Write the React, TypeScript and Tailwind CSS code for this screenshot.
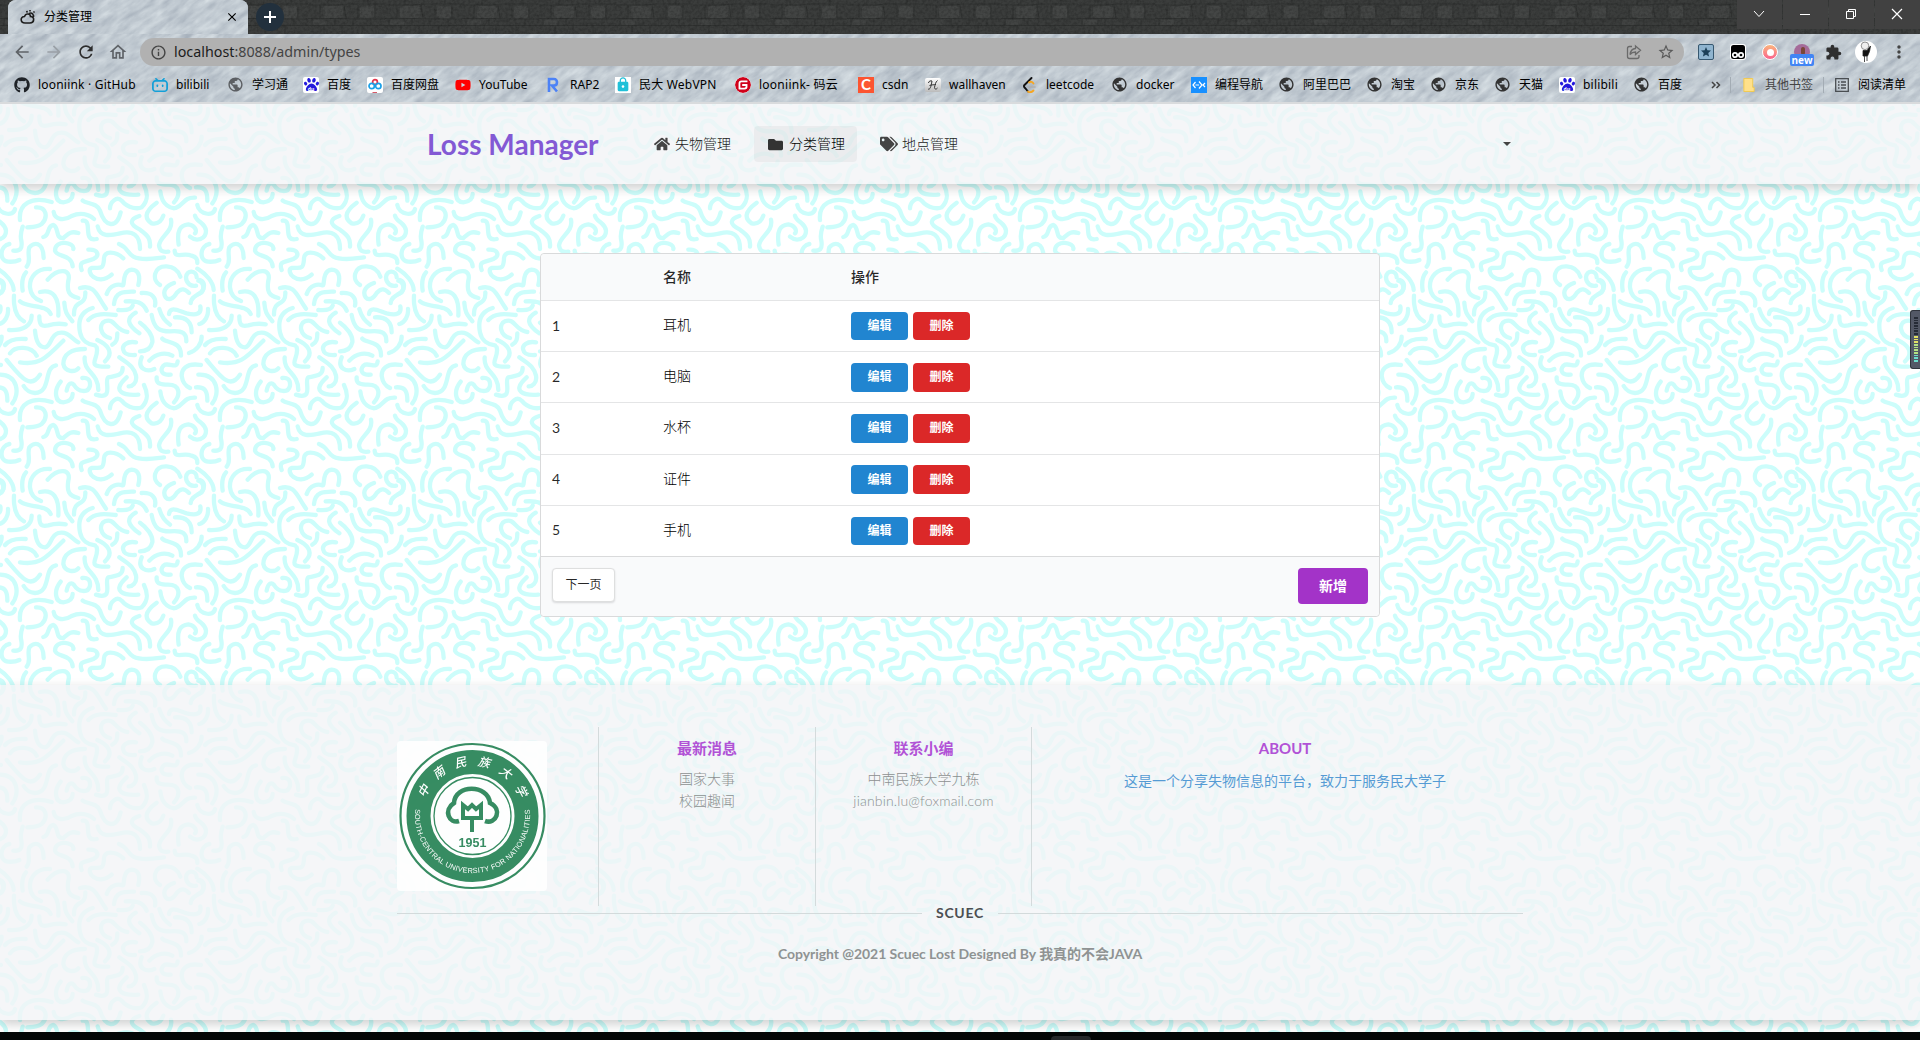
import React from "react";
import { FaGithub, FaHome, FaFolder, FaTags, FaYoutube, FaPaw } from "react-icons/fa";
import { SiBilibili, SiGitee } from "react-icons/si";
import {
  MdPublic,
  MdArrowBack,
  MdArrowForward,
  MdRefresh,
  MdOutlineHome,
  MdInfoOutline,
  MdStarBorder,
  MdStar,
  MdExtension,
  MdMoreVert,
  MdLock,
  MdClose,
} from "react-icons/md";

/* Doodle strokes of one 200px wallpaper tile, in thirds of a pixel. */
const STROKES = [
  "M42 575 C40 615 48 640 72 652",
  "M24 615 C26 635 15 655 -2 660",
  "M95 35 C95 65 70 80 27 78",
  "M118 37 C118 65 125 68 145 64 C165 58 180 58 197 61",
  "M60 592 C80 612 140 600 152 630",
  "M120 564 C160 555 178 580 175 635",
  "M193 596 C195 630 205 635 217 652",
  "M105 80 C108 115 120 130 135 130 C155 125 150 95 175 87 C205 80 215 105 235 115",
  "M15 123 C30 105 55 103 77 105",
  "M30 148 C45 125 95 125 110 155",
  "M60 175 C120 185 140 160 190 110",
  "M255 135 C215 135 190 150 190 180 C195 205 225 205 235 193",
  "M278 12 C235 25 235 60 240 85 C245 110 265 122 285 124",
  "M265 48 C285 25 320 30 347 33",
  "M330 102 C300 95 295 60 315 52 C345 40 345 80 382 84",
  "M352 88 C352 105 350 115 337 122",
  "M407 26 C380 42 378 60 418 88",
  "M420 56 C440 70 460 95 457 115 C452 138 435 142 420 142",
  "M455 33 C462 75 480 82 510 82 C550 78 560 90 559 112",
  "M525 40 C560 38 575 55 575 85",
  "M507 30 C510 5 535 20 560 28 C590 35 605 30 601 7",
  "M478 15 C485 40 495 50 510 62",
  "M567 147 C590 140 605 120 605 98",
  "M487 104 C500 118 545 110 543 155",
  "M448 170 C470 145 500 145 517 155",
  "M408 115 C380 110 365 125 370 138 C372 152 385 154 405 153",
  "M292 108 C320 120 345 145 315 172",
  "M290 130 C300 165 250 190 325 188",
  "M254 160 C250 205 295 205 295 258",
  "M358 160 C385 180 400 185 408 215 C412 238 395 248 386 247",
  "M415 272 C375 275 330 265 380 220",
  "M368 192 C368 215 350 215 325 220 C310 230 345 290 288 272",
  "M425 160 C410 195 440 205 463 195",
  "M533 172 C530 195 515 178 495 182 C480 190 478 215 512 212",
  "M603 183 C555 175 545 200 545 215 C548 240 560 247 570 252",
  "M20 168 C60 215 90 260 120 212",
  "M168 184 C130 190 155 265 105 267 C85 265 78 258 71 246",
  "M182 233 C160 260 165 295 190 295 C215 292 218 280 218 270",
  "M200 260 C205 235 215 235 222 243 C235 265 265 268 270 245 C272 225 260 220 247 222",
  "M-5 212 C55 210 60 270 37 298",
  "M-12 250 C18 248 22 265 22 290",
  "M470 220 C468 240 480 240 500 242 C545 240 540 275 522 295",
  "M481 262 C485 305 515 315 527 312 C555 300 550 280 585 281",
  "M592 303 C597 330 640 340 645 315",
  "M330 313 C330 295 350 275 365 290 C385 315 415 315 425 310 C445 290 445 270 432 243",
  "M470 296 C430 325 435 345 455 358 C475 362 485 350 490 335",
  "M60 348 C55 300 95 275 155 294",
  "M108 310 C140 308 145 340 125 360 C110 370 100 369 82 370",
  "M161 324 C165 350 195 350 215 336 C240 325 265 330 282 345",
  "M248 290 C260 300 290 295 300 320 C315 370 350 375 362 325",
  "M130 399 C150 395 140 365 160 363 C178 370 165 405 190 402 C205 390 210 380 235 387",
  "M248 350 C280 345 245 415 290 405",
  "M293 367 C300 400 330 395 360 388 C400 378 420 395 420 435",
  "M418 336 C390 345 385 360 420 377 C445 395 452 405 450 428",
  "M513 347 C520 385 480 395 477 425 C480 440 485 445 505 443",
  "M536 422 C530 380 540 363 565 361 C590 365 590 385 585 388",
  "M585 335 C590 355 615 355 618 380 C618 405 590 415 570 398",
  "M68 368 C62 385 60 395 64 410 C68 435 60 442 40 440",
  "M28 420 C0 425 -5 470 25 473 C40 474 50 472 58 468",
  "M80 488 C95 470 80 450 88 430 C100 415 130 410 131 462",
  "M220 435 C225 415 165 405 165 440 C170 460 215 450 218 487",
  "M265 437 C295 435 300 455 280 465 C255 475 235 470 245 498",
  "M370 463 C345 440 310 440 312 465 C310 500 300 490 275 492 C255 500 290 550 335 512",
  "M357 420 C395 435 375 465 440 465 C460 465 475 462 492 460",
  "M524 440 C525 465 550 445 575 455 C590 460 592 465 592 477",
  "M480 543 C455 530 460 485 500 487 C525 488 535 500 541 518",
  "M590 520 C590 500 560 495 558 520 C558 540 575 548 588 545",
  "M522 537 C500 545 485 560 497 580 C505 590 520 585 530 567 C545 550 555 555 567 567",
  "M572 597 C573 570 612 575 612 545 C612 535 605 530 600 528",
  "M592 494 C620 510 640 535 641 558",
  "M78 505 C65 520 65 540 68 560",
  "M150 495 C110 492 88 520 90 550 C92 575 105 585 123 591",
  "M143 527 C175 490 215 495 205 530 C200 560 205 575 235 582",
  "M240 552 C285 540 290 575 318 614",
  "M256 565 C258 610 220 585 222 632",
  "M320 570 C330 540 355 540 368 544 C375 545 365 500 395 497 C415 498 422 515 415 543",
  "M342 600 C345 565 370 562 402 563",
  "M425 567 C455 565 470 580 465 605",
  "M377 592 C410 590 430 595 440 620",
  "M355 618 C380 620 395 615 398 605",
  "M-5 530 C15 535 15 565 -5 570",
].join(" ");

function Wallpaper() {
  const shifts = [-600, 0, 600];
  return (
    <svg className="absolute inset-0 h-full w-full" aria-hidden="true">
      <defs>
        <path id="doodle" d={STROKES} fill="none" stroke="#ccfdfb" strokeWidth="13" strokeLinecap="round" strokeLinejoin="round" />
        <pattern id="doodles" width="600" height="600" patternUnits="userSpaceOnUse" patternTransform="scale(0.33333333)">
          {shifts.map((x) => shifts.map((y) => <use key={`${x},${y}`} href="#doodle" x={x} y={y} />))}
        </pattern>
      </defs>
      <rect width="100%" height="100%" fill="#fff" />
      <rect width="100%" height="100%" fill="url(#doodles)" />
    </svg>
  );
}

function Bricks() {
  return (
    <svg className="absolute inset-0 h-full w-full" aria-hidden="true">
      <defs>
        <pattern id="bricks" width="77" height="34" patternUnits="userSpaceOnUse">
          <rect width="77" height="34" fill="#3b3d3c" />
          <rect x="15" y="6" width="20" height="12" rx="3" fill="#434544" />
          <rect x="52" y="6" width="14" height="12" rx="3" fill="#444645" />
          <rect x="5" y="20" width="14" height="5" rx="2" fill="#424443" />
          <path d="M0 5H28L40 4H77M0 18.500H30L50 19H77M0 25.500H77M12 5V18M36 5L38 18M50 5V18M67 5V18M20 0V5M60 0V5M4 19V25M27 19V25M45 19V25M63 19V25M16 26V34M54 26V34M34 26V34" stroke="#303231" fill="none" />
        </pattern>
        <filter id="grit" x="0" y="0" width="100%" height="100%">
          <feTurbulence type="fractalNoise" baseFrequency="0.35" numOctaves="3" />
          <feColorMatrix values="0 0 0 0 0  0 0 0 0 0  0 0 0 0 0  0.400 0 0 0 -0.140" />
        </filter>
      </defs>
      <rect width="100%" height="100%" fill="url(#bricks)" />
      <rect width="100%" height="100%" filter="url(#grit)" />
    </svg>
  );
}

function Ice({ id, seed }: { id: string; seed: number }) {
  return (
    <svg className="absolute inset-0 h-full w-full" aria-hidden="true">
      <defs>
        <filter id={id} x="0" y="0" width="100%" height="100%" colorInterpolationFilters="sRGB">
          <feTurbulence type="fractalNoise" baseFrequency="0.05 0.16" numOctaves="5" seed={seed} />
          <feColorMatrix values="0.240 0 0 0 0.635  0.230 0 0 0 0.675  0.200 0 0 0 0.720  0 0 0 0 1" />
        </filter>
      </defs>
      <g transform="rotate(-35)">
        <rect x="-100" y="-100" width="2000" height="1350" filter={`url(#${id})`} />
      </g>
    </svg>
  );
}

const globe = <MdPublic className="-ml-px size-[17px] text-[#333]" />;
const baidu = (
  <span className="relative flex size-4 items-center justify-center rounded-[2px] bg-white">
    <FaPaw className="size-[15px] text-[#2319dc]" />
    <span className="absolute bottom-[1px] text-[5px] leading-none font-bold text-white">du</span>
  </span>
);

const bookmarks: { icon: React.ReactNode; label: string; cell: string }[] = [
  { icon: <FaGithub className="size-4 text-[#1f2328]" />, label: "looniink · GitHub", cell: "w-[138px] tracking-[0.200px]" },
  { icon: <SiBilibili className="size-4 text-[#14a0d8]" />, label: "bilibili", cell: "w-[76px]" },
  { icon: <MdPublic className="-ml-px size-[17px] text-[#5c5f63]" />, label: "学习通", cell: "w-[75px]" },
  { icon: baidu, label: "百度", cell: "w-[64px]" },
  {
    icon: (
      <svg viewBox="0 0 16 16" className="size-4">
        <rect width="16" height="16" rx="2" fill="#fff" />
        <g fill="none" strokeWidth="1.700">
          <circle cx="8" cy="5" r="2.400" stroke="#e4344d" />
          <circle cx="4.700" cy="9" r="2.700" stroke="#1aa0e8" />
          <circle cx="11.300" cy="9" r="2.700" stroke="#1aa0e8" />
        </g>
        <path d="M5.500 15.500H10" stroke="#d65a68" />
      </svg>
    ),
    label: "百度网盘",
    cell: "w-[88px]",
  },
  { icon: <FaYoutube className="size-4 text-[#f00]" />, label: "YouTube", cell: "w-[91px]" },
  {
    icon: (
      <svg viewBox="0 0 16 16" className="size-4">
        <path d="M3 15V2H8C12 2 12 8.500 8 8.500H6L11 14.500" fill="none" stroke="#4c82f6" strokeWidth="2.600" />
      </svg>
    ),
    label: "RAP2",
    cell: "w-[69px]",
  },
  {
    icon: (
      <span className="flex size-4 items-center justify-center bg-white">
        <MdLock className="size-[17px] text-[#20c0d8]" />
      </span>
    ),
    label: "民大 WebVPN",
    cell: "w-[120px] tracking-[0.200px]",
  },
  { icon: <SiGitee className="size-4 rounded-full bg-white text-[#d0021b]" />, label: "looniink- 码云", cell: "w-[123px] tracking-[0.250px]" },
  {
    icon: (
      <span className="flex size-4 items-center justify-center bg-[#fc5531] font-['Lato'] text-[15px] leading-none font-bold text-white">C</span>
    ),
    label: "csdn",
    cell: "w-[67px]",
  },
  {
    icon: (
      <span className="flex h-[14px] w-4 items-center justify-center rounded-[2px] bg-linear-to-b from-white to-[#bbb]">
        <svg viewBox="0 0 14 12" className="h-3 w-[14px] fill-none stroke-[#333]">
          <path d="M2 10C4 11 5 8 6 2C5 1.500 2.500 2 2.500 4M3.500 6.500C6 5.500 8 6 10 5.500M11.500 1.500C9.500 3 9 6 8.500 8.500C8.500 10.500 10.500 10.500 11.500 9" />
        </svg>
      </span>
    ),
    label: "wallhaven",
    cell: "w-[97px]",
  },
  {
    icon: (
      <svg viewBox="0 0 16 16" className="size-4" fill="none" strokeLinecap="round">
        <path d="M9.500 1L2.500 8C1.500 9 2 10 3 11L6 14.500" stroke="#111" strokeWidth="1.900" />
        <path d="M6 14.500C8 16 10 15 11.500 13.500M7 5.500C9 4 10.500 5 11.500 6.500" stroke="#f5a623" strokeWidth="1.800" />
        <path d="M7 10H13" stroke="#b0b0b0" strokeWidth="1.600" />
      </svg>
    ),
    label: "leetcode",
    cell: "w-[90px]",
  },
  { icon: globe, label: "docker", cell: "w-[79px]" },
  {
    icon: (
      <svg viewBox="0 0 16 16" className="size-4" fill="none" stroke="#fff" strokeWidth="1.200">
        <rect width="16" height="16" fill="#1890ff" stroke="none" />
        <path d="M4.500 5L2 8L4.500 11M8 4.500L11 8L8 11.500M14 6L12 8L14 10M4.500 8H8" />
      </svg>
    ),
    label: "编程导航",
    cell: "w-[88px]",
  },
  { icon: globe, label: "阿里巴巴", cell: "w-[88px]" },
  { icon: globe, label: "淘宝", cell: "w-[64px]" },
  { icon: globe, label: "京东", cell: "w-[64px]" },
  { icon: globe, label: "天猫", cell: "w-[64px]" },
  { icon: baidu, label: "bilibili", cell: "w-[75px] tracking-[0.200px]" },
  { icon: globe, label: "百度", cell: "w-[77px]" },
];

function TabStrip() {
  return (
    <div className="relative flex h-[34px] overflow-hidden bg-[#3a3b3a]">
      <Bricks />
      <div className="relative ml-2 flex h-full w-[240px] items-center overflow-hidden rounded-t-lg bg-[#c3ccd4]">
        <Ice id="ice-tab" seed={4} />
        <svg viewBox="0 0 16 16" className="relative ml-3 size-4 fill-none stroke-[#1d1d1d] stroke-[1.6]">
          <path d="M5 14C0 14 0 7.500 4.500 7.500C6 3.500 10.500 5 10.500 7.500C15 8 14.500 14 10 14ZM9 4.500C12 3 14.500 6 13 8.500M10 1V2.500M14.500 2.500L13.500 3.500M6.500 2L7.500 3.500" />
        </svg>
        <span className="relative ml-2 text-[12px] text-black">分类管理</span>
        <MdClose className="relative mr-[9px] ml-auto size-[14px] text-black" />
      </div>
      <div className="relative mt-[3px] ml-2 flex size-7 items-center justify-center rounded-full bg-[#22303d]">
        <svg viewBox="0 0 14 14" className="size-[14px] stroke-white stroke-2">
          <path d="M7 1V13M1 7H13" />
        </svg>
      </div>
      <div className="relative ml-auto flex h-[29px] gap-px">
        <div className="flex w-[45px] items-center justify-center bg-[#414141] pr-px pb-px">
          <svg viewBox="0 0 12 12" className="size-3 fill-none stroke-white"><path d="M1 3L6 8.500L11 3" /></svg>
        </div>
        <div className="flex w-[45px] items-center justify-center bg-[#414141] pr-[2px]">
          <span className="h-px w-[10px] bg-white" />
        </div>
        <div className="flex w-[45px] items-center justify-center bg-[#414141] pr-[2px] pb-px">
          <svg viewBox="0 0 12 12" className="size-3 fill-none stroke-white"><path d="M1.500 3.500H8.500V10.500H1.500ZM3.500 3.500V1.500H10.500V8.500H8.500" /></svg>
        </div>
        <div className="flex w-[45px] items-center justify-center bg-[#414141] pr-[2px] pb-px">
          <svg viewBox="0 0 12 12" className="size-3 fill-none stroke-white stroke-[1.2]"><path d="M1 1L11 11M11 1L1 11" /></svg>
        </div>
      </div>
    </div>
  );
}

function AddressRow() {
  return (
    <div className="relative flex h-9 items-center">
      <div className="flex w-[140px] gap-3 pl-3">
        <MdArrowBack className="size-5 text-[#5f6368]" />
        <MdArrowForward className="size-5 text-[#9aa0a6]" />
        <MdRefresh className="size-5 text-[#2d2d2d]" />
        <MdOutlineHome className="size-5 text-[#5f6368]" />
      </div>
      <div className="flex h-7 w-[1544px] items-center rounded-full bg-[#b1b1b1] pl-[10px]">
        <MdInfoOutline className="size-[17px] text-[#444]" />
        <span className="ml-[7px] font-['Noto_Sans'] text-[14.300px] whitespace-nowrap text-[#444]">
          <span className="text-[#1c1c1c]">localhost</span>:8088/admin/types
        </span>
        <svg viewBox="0 0 16 16" className="mr-[15px] ml-auto size-4 fill-none stroke-[#6a6a6a] stroke-[1.300]">
          <path d="M6 2.500H3.500C2 2.500 1.500 3 1.500 4.500V12.500C1.500 14 2 14.500 3.500 14.500H11C12.500 14.500 13 14 13 12.500V11M9.500 2L14.500 6.300L9.500 10.500V8C7 8 5.500 8.500 4 10.500C4.500 7 6.500 4.700 9.500 4.500Z" />
        </svg>
        <MdStarBorder className="mr-[9px] size-[18px] text-[#5a5a5a]" />
      </div>
      <div className="flex flex-1 items-center pl-[14px]">
        <span className="flex size-4 items-center justify-center rounded-[2px] border border-[#36576f] bg-[#8fb4cf]">
          <MdStar className="size-3 text-[#1d4058]" />
        </span>
        <svg viewBox="0 0 16 16" className="ml-4 size-4">
          <rect width="16" height="16" rx="3" fill="#fff" />
          <rect x="1" y="1" width="14" height="14" rx="2.500" fill="#000" />
          <g fill="#000" stroke="#fff" strokeWidth="1.700"><circle cx="5" cy="11" r="2.200" /><circle cx="11" cy="11" r="2.200" /></g>
        </svg>
        <span className="ml-4 flex size-4 items-center justify-center rounded-full border border-white bg-linear-to-b from-[#f9b47c] to-[#f9608c]">
          <span className="size-[7px] rounded-full bg-white" />
        </span>
        <span className="relative ml-4 size-4 rounded-full bg-[#a56b99]">
          <span className="absolute top-[3px] left-[7px] h-2 w-1 rounded-full bg-[#7a4638]" />
          <span className="absolute top-[10px] -left-1 flex h-3 w-6 items-center justify-center rounded-[2px] bg-[#4285f4] font-['Open_Sans'] text-[10px] leading-none font-bold text-white">new</span>
        </span>
        <MdExtension className="ml-[15px] size-[17px] text-[#2f2f2f]" />
        <svg viewBox="0 0 22 22" className="ml-[13px] size-[22px]">
          <circle cx="11" cy="11" r="11" fill="#fff" />
          <circle cx="10" cy="4.800" r="3.800" fill="#eee" stroke="#777" strokeWidth=".8" />
          <path d="M8 9.500H12L15.500 5L14.500 10.500L12.500 15H8ZM9.500 15V21M12 15V20" fill="#111" stroke="#222" strokeWidth=".8" />
        </svg>
        <MdMoreVert className="ml-3 size-5 text-[#444]" />
      </div>
    </div>
  );
}

function BookmarkRow() {
  return (
    <div className="relative flex h-[32px] items-center pb-[3px] pl-[14px] font-['Noto_Sans','Noto_Sans_CJK_SC',sans-serif] text-[12px] text-black">
      {bookmarks.map((b, i) => (
        <div key={i} className={`flex shrink-0 items-center whitespace-nowrap ${b.cell}`}>
          <span className="flex w-6 shrink-0">{b.icon}</span>
          {b.label}
        </div>
      ))}
      <svg viewBox="0 0 10 8" className="h-2 w-[10px] shrink-0 fill-none stroke-[#444] stroke-[1.500]"><path d="M1 1L4 4L1 7M5.500 1L8.500 4L5.500 7" /></svg>
      <span className="ml-[9px] h-4 w-px bg-[#a3acb4]" />
      <svg viewBox="0 0 12 15" className="ml-3 h-[14px] w-3 shrink-0"><path d="M.5.5H10V10H11.500V14.500H.5Z" fill="#ffe08a" stroke="#f2c94c" /></svg>
      <span className="ml-[10px] w-[58px] shrink-0 whitespace-nowrap text-[#444]">其他书签</span>
      <span className="h-4 w-px bg-[#a3acb4]" />
      <svg viewBox="0 0 14 14" className="ml-[11px] size-[14px] shrink-0 fill-none stroke-[#4a4e52] stroke-[1.300]">
        <path d="M.7.700H13.300V13.300H.7ZM3 4H4.500M6 4H11M3 7H4.500M6 7H11M3 10H4.500M6 10H11" />
      </svg>
      <span className="ml-[9px] whitespace-nowrap">阅读清单</span>
    </div>
  );
}

function NavBar() {
  return (
    <nav className="relative flex h-20 items-center bg-[#f2f4f6]/80 pl-[427px] text-[14px] text-[#444] shadow-[0_4px_10px_rgba(34,36,38,0.22)]">
      <h1 className="w-[215px] text-[28px] leading-none font-bold whitespace-nowrap text-[#8359d4]">Loss Manager</h1>
      <div className="flex h-9 w-[112px] items-center pl-3">
        <FaHome className="size-4" />
        <span className="ml-[5px] pb-[2px] font-light text-[#222]">失物管理</span>
      </div>
      <div className="flex h-9 w-[103px] items-center rounded bg-black/[0.04] pl-[14px] text-[#333]">
        <FaFolder className="size-[15px]" />
        <span className="ml-[6px] pb-[2px] font-light text-black">分类管理</span>
      </div>
      <div className="flex h-9 items-center pl-[23px]">
        <FaTags className="size-[18px]" />
        <span className="ml-1 pb-[2px] font-light text-[#222]">地点管理</span>
      </div>
      <span className="mr-[409px] ml-auto border-x-[4px] border-t-[4px] border-x-transparent border-t-[#444]" />
    </nav>
  );
}

const rows = ["耳机", "电脑", "水杯", "证件", "手机"];

function TypesTable() {
  return (
    <table className="relative mx-auto mt-[69px] h-[364px] w-[840px] table-fixed border-separate border-spacing-0 rounded border border-[#d9dadb] bg-white text-[14px] text-black/85">
      <thead>
        <tr className="h-[46px] text-left">
          <th className="w-[112px] rounded-tl bg-[#f9fafb]" />
          <th className="w-[187px] bg-[#f9fafb] pt-0 pb-[2px] pl-[10px] font-medium">名称</th>
          <th className="rounded-tr bg-[#f9fafb] pt-0 pb-[2px] pl-[11px] font-medium">操作</th>
        </tr>
      </thead>
      <tbody>
        {rows.map((name, i) => (
          <tr key={name}>
            <td className="border-t border-[#e4e5e6] pt-0 pb-[2px] pl-[11px]">{i + 1}</td>
            <td className="border-t border-[#e4e5e6] pt-0 pb-[3px] pl-[10px] font-light text-black">{name}</td>
            <td className="border-t border-[#e4e5e6] py-0 pl-[11px]">
              <div className="flex gap-[5px] text-[12px] font-bold text-white">
                <button className="h-[28.500px] w-[57px] rounded bg-[#2185d0] leading-none">编辑</button>
                <button className="h-[28.500px] w-[57px] rounded bg-[#db2828] leading-none">删除</button>
              </div>
            </td>
          </tr>
        ))}
      </tbody>
      <tfoot>
        <tr className="h-[60px]">
          <td colSpan={3} className="rounded-b border-t border-[#d9dadb] bg-[#f9fafb] px-[11px] pt-0 pb-px">
            <div className="flex items-start justify-between">
              <button className="h-[34px] w-[63px] rounded border border-[#dedfdf] bg-white pb-px text-[12px] leading-none shadow-[0_1px_2px_rgba(34,36,38,0.15)]">下一页</button>
              <button className="h-9 w-[70px] rounded bg-[#a333c8] pb-px text-[14px] leading-none font-bold text-white">新增</button>
            </div>
          </td>
        </tr>
      </tfoot>
    </table>
  );
}

function Seal() {
  return (
    <svg viewBox="0 0 150 150" className="size-[150px] opacity-90">
      <defs>
        <path id="seal-top" d="M25 75A50.500 50.500 0 0 1 126 75" />
        <path id="seal-bottom" d="M18.500 67A57.500 57.500 0 1 0 132.500 67" />
      </defs>
      <rect width="150" height="150" rx="4" fill="#fff" />
      <g fill="none" stroke="#238152">
        <circle cx="75.500" cy="75" r="72" strokeWidth="2.200" />
        <circle cx="75.500" cy="75" r="54" strokeWidth="24" />
        <circle cx="75.500" cy="75" r="38.500" strokeWidth="1.300" />
        <path d="M62 80C52 83 46 69 57 62C58 43 91 43 93 62C106 68 99 84 88 80" strokeWidth="4.600" />
        <path d="M66 64V77H84V64L79 68L75 64L71 68ZM75 76V91" strokeWidth="4" />
      </g>
      <text fill="#fff" fontSize="12" className="font-['Noto_Sans_CJK_SC'] font-medium italic">
        <textPath href="#seal-top" startOffset="18" textLength="122">中南民族大学</textPath>
      </text>
      <text fill="#fff" fontSize="7.300" className="font-['Liberation_Sans']">
        <textPath href="#seal-bottom" startOffset="1" textLength="193">SOUTH-CENTRAL UNIVERSITY FOR NATIONALITIES</textPath>
      </text>
      <text x="75.500" y="105.500" textAnchor="middle" fill="#238152" fontSize="12.500" className="font-['Liberation_Sans'] font-bold">1951</text>
    </svg>
  );
}

function Footer() {
  return (
    <footer className="relative mt-[68px] h-[335px] bg-[#f2f4f6]/80 pt-[42px] text-center text-[14px] shadow-[0_4px_10px_rgba(34,36,38,0.22)]">
      <div className="mx-auto w-[1126px]">
        <div className="grid h-[179px] grid-cols-[201px_217px_216px_492px]">
          <div className="flex pt-[14px]"><Seal /></div>
          <div className="border-l border-[#d4dbdc] pt-[10px]">
            <h4 className="text-[15px] leading-[22px] font-bold text-[#b152d6]">最新消息</h4>
            <div className="mt-[9px] leading-[22px] font-light text-[#8d9191]">国家大事<br />校园趣闻</div>
          </div>
          <div className="border-l border-[#d4dbdc] pt-[10px]">
            <h4 className="text-[15px] leading-[22px] font-bold text-[#b152d6]">联系小编</h4>
            <div className="mt-[9px] leading-[22px] font-light text-[#8d9191]">
              中南民族大学九栋<br /><span className="tracking-[0.170px]">jianbin.lu@foxmail.com</span>
            </div>
          </div>
          <div className="border-l border-[#d4dbdc] pt-[10px] pl-[15px]">
            <h4 className="text-[15px] leading-[22px] font-bold text-[#b152d6]">ABOUT</h4>
            <p className="mt-[11px] leading-[22px] text-[#559bd4]">这是一个分享失物信息的平台，致力于服务民大学子</p>
          </div>
        </div>
        <div className="flex h-[14px] items-center gap-[14px]">
          <span className="h-px flex-1 bg-[#d3dadb]" />
          <span className="w-[48px] text-[14px] leading-[14px] font-bold tracking-[0.700px] text-[#4c4f52]">SCUEC</span>
          <span className="h-px flex-1 bg-[#d3dadb]" />
        </div>
        <p className="mt-[23px] leading-[22px] font-bold tracking-[-0.060px] text-[#8f9393]">Copyright @2021 Scuec Lost Designed By 我真的不会JAVA</p>
      </div>
    </footer>
  );
}

function LevelMeter() {
  const bars = Array.from({ length: 17 }, (_, i) => i);
  return (
    <div className="absolute top-[206px] right-0 flex h-[59px] w-[10px] flex-col gap-[1px] rounded-l-[3px] border border-r-0 border-[#30343c] bg-[#535866] pt-[6px] pl-[3px]">
      {bars.map((i) => (
        <span key={i} className={`h-[1.700px] w-1 shrink-0 ${i < 7 ? "bg-[#262b36]" : i < 10 ? "bg-[#e2e064]" : i < 14 ? "bg-[#b3e282]" : "bg-[#6cdccc]"}`} />
      ))}
    </div>
  );
}

export default function App() {
  return (
    <div className="flex h-[1040px] w-[1920px] flex-col overflow-hidden font-['Lato','Noto_Sans_CJK_SC',sans-serif]">
      <TabStrip />
      <div className="relative h-[70px] shrink-0 overflow-hidden border-b-2 border-[#d9dbdd]">
        <Ice id="ice-bar" seed={9} />
        <AddressRow />
        <BookmarkRow />
      </div>
      <main className="relative h-[928px] shrink-0 overflow-hidden bg-white">
        <Wallpaper />
        <NavBar />
        <TypesTable />
        <Footer />
        <LevelMeter />
      </main>
      <div className="flex flex-1 bg-[#030606]">
        <div className="mt-1 ml-[1051px] h-1 w-10 rounded-t bg-[#25282a]" />
      </div>
    </div>
  );
}
